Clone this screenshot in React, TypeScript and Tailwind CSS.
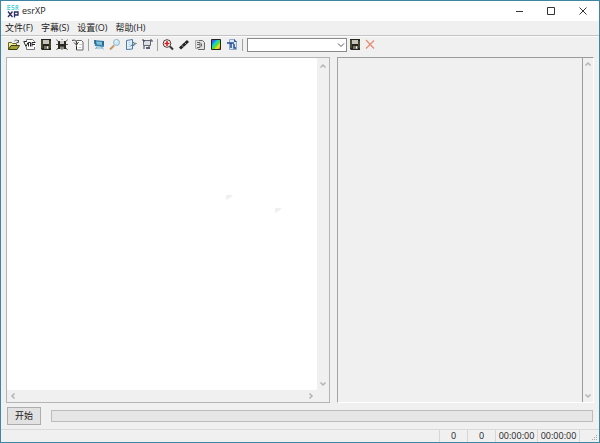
import type { ReactNode } from "react";

const menus = ["文件(F)", "字幕(S)", "设置(O)", "帮助(H)"];

function Glyph({ children }: { children: ReactNode }) {
  return (
    <svg viewBox="0 0 16 16" className="size-4" fill="none" aria-hidden="true">
      {children}
    </svg>
  );
}

function Floppy() {
  return (
    <>
      <path d="M3 2h10v11H4l-1-1z" fill="#25251c" />
      <path d="M5 3h6v4H5z" fill="#c4c4ba" />
      <path d="M4 3v8M12 4v7" stroke="#66663a" />
      <path d="M6 9h5v3H6z" fill="#77776e" />
      <path d="M9 9.500h1v2H9z" fill="#fff" />
    </>
  );
}

type Tool = { name: string; art: ReactNode };

const fileTools: Tool[] = [
  {
    name: "Open video",
    art: (
      <>
        <path d="M2.500 12.500v-7h3l1 1h4v2" fill="#f3ee9a" stroke="#66662c" />
        <path d="M2.500 12.500l2.500-4h8.500l-2.500 4z" fill="#a3a332" stroke="#3c3c12" />
        <path d="M8.500 4c1-1.200 2.500-1.200 3.500 0M12.500 3v2.500h-2" stroke="#555" />
      </>
    ),
  },
  {
    name: "Open AVS",
    art: (
      <>
        <path d="M4.500 2.500h6l2 2v8h-8z" fill="#fff" stroke="#777" />
        <path d="M2 5h12v5H2z" fill="#fff" />
        <path d="M1.500 4.500h3M2 5l2 4.500L6 5.500M6.500 9.500v-4h2v4M10 9.500v-4h3.500M10 7.500h3" stroke="#222" />
      </>
    ),
  },
  { name: "Save", art: <Floppy /> },
  {
    name: "Save as",
    art: (
      <>
        <path d="M4 4h8v8H4z" fill="#292921" />
        <path d="M6 4h4v3H6z" fill="#c9c9c0" />
        <path d="M6 9.500h4V12H6z" fill="#88887e" />
        <path d="M2.500 2.500l1.500 2M13.500 2.500l-1.500 2M2.500 13l1.500-2M13.500 13l-1.500-2M2 7.500h2M12 7.500h2M8 2v1M8 12v1" stroke="#5c5c44" />
      </>
    ),
  },
  {
    name: "Import subtitles",
    art: (
      <>
        <path d="M6.500 3.500h5l1.500 1.500v8H6.500z" fill="#fff" stroke="#666" />
        <path d="M2 3.500c3-1 4.500 0 4.500 3M4 5.500L6.500 8l2-3" stroke="#443b37" />
        <path d="M9 7.500h3M8.500 10.500h3" stroke="#ccc" />
        <path d="M6.500 9.500v3" stroke="#222" />
      </>
    ),
  },
];

const viewTools: Tool[] = [
  {
    name: "Video window",
    art: (
      <>
        <path d="M3 3l10 1v6L4 9z" fill="#3684ae" />
        <path d="M5 4.500l6 .500v3l-5-.500z" fill="#86bfd8" />
        <path d="M3 4h2M3 6h2M11 5h2M11 7h2" stroke="#24516f" />
        <path d="M6 9.500L4.500 12M10.500 10l2 2.500M5 11h7" stroke="#74b0cb" />
      </>
    ),
  },
  {
    name: "Find",
    art: (
      <>
        <path d="M3 12.500l4-4" stroke="#c99663" strokeWidth="2" />
        <circle cx="9.500" cy="5.500" r="3" fill="#cce8f7" stroke="#8fb1c6" />
        <path d="M8 4.500l2-1" stroke="#fff" />
      </>
    ),
  },
  {
    name: "Edit",
    art: (
      <>
        <path d="M3.500 3.500l6-1V12l-6 .500z" fill="#e5f2fb" stroke="#4c7ba4" />
        <path d="M5.500 5.500h2M5.500 7.500h2M5.500 9.500h2" stroke="#b0cadb" />
        <path d="M7.500 9l5-3M10 5l2.500 2L10 9" stroke="#4e7e9d" />
        <path d="M12 6.500h2" stroke="#bc9755" />
      </>
    ),
  },
  {
    name: "Preview",
    art: (
      <>
        <path d="M4.500 3.500h7v5h-7z" fill="#dedee6" stroke="#666676" />
        <path d="M3 3h2v2M11 3h2v2M5 9v3M10 9v3" stroke="#3f3f55" />
        <path d="M7 10h4v2H7z" fill="#5d5d75" />
      </>
    ),
  },
];

const ocrTools: Tool[] = [
  {
    name: "Zoom in",
    art: (
      <>
        <circle cx="7" cy="6.500" r="3.800" fill="#fff" stroke="#55302f" />
        <path d="M4.500 6.500h5M7 4v5" stroke="#d21f24" strokeWidth="1.600" />
        <path d="M10 9.500l3 3" stroke="#333" strokeWidth="2" />
      </>
    ),
  },
  {
    name: "Pick",
    art: (
      <>
        <path d="M4 11.500l8-7.500" stroke="#222" strokeWidth="3" />
        <path d="M5.500 8l2 2M8.500 5.500l1.500 1.500" stroke="#999" />
      </>
    ),
  },
  {
    name: "Copy text",
    art: (
      <>
        <path d="M3.500 3.500h4v8h-4z" fill="#e2e2e2" stroke="#aaa" />
        <path d="M7 3.500h3.500l2 2v7H6" fill="#e2e2df" stroke="#666" />
        <path d="M5 5.500h3v2H5M8 7.500v3H5M9.500 6.500v3" stroke="#666" />
      </>
    ),
  },
  {
    name: "Colors",
    art: (
      <>
        <defs>
          <linearGradient id="spectrum" x1="3" y1="3" x2="13" y2="12" gradientUnits="userSpaceOnUse">
            <stop offset="0" stopColor="#d022cf" />
            <stop offset=".2" stopColor="#2468ec" />
            <stop offset=".4" stopColor="#19d7d0" />
            <stop offset=".55" stopColor="#55db2b" />
            <stop offset=".75" stopColor="#f7e522" />
            <stop offset="1" stopColor="#e52722" />
          </linearGradient>
        </defs>
        <path d="M3.500 2.500h9v10h-9z" fill="url(#spectrum)" stroke="#222" />
      </>
    ),
  },
  {
    name: "Export text",
    art: (
      <>
        <path d="M5.500 2.500h5l2 2v8h-7z" fill="#dceafa" stroke="#93a9c7" />
        <path d="M3 6h7M7 6v5M10 7v4h2" stroke="#234f94" strokeWidth="1.500" />
        <path d="M10.500 2.500v2h2" stroke="#234f94" />
      </>
    ),
  },
];

function ToolGroup({ tools }: { tools: Tool[] }) {
  return (
    <div className="flex">
      {tools.map((tool) => (
        <button key={tool.name} type="button" aria-label={tool.name} className="size-4">
          <Glyph>{tool.art}</Glyph>
        </button>
      ))}
    </div>
  );
}

function Divider() {
  return (
    <div className="flex w-[5px] justify-center">
      <div className="h-3 w-px bg-[#a0a0a0]" />
    </div>
  );
}

const arrows = {
  up: "M1.500 5.500L4 3l2.500 2.500",
  down: "M1.500 2.500L4 5l2.500-2.500",
  left: "M5.500 1.500L3 4l2.500 2.500",
  right: "M2.500 1.500L5 4 2.500 6.500",
};

function Arrow({ to }: { to: keyof typeof arrows }) {
  return (
    <button type="button" aria-label={`Scroll ${to}`} className="flex size-3 items-center justify-center">
      <svg viewBox="0 0 8 8" className="size-2" fill="none" aria-hidden="true">
        <path d={arrows[to]} stroke="#b4b4b4" strokeWidth="1.500" />
      </svg>
    </button>
  );
}

function Smudge() {
  return (
    <svg viewBox="0 0 8 6" className="h-1.5 w-2" aria-hidden="true">
      <path d="M0 0h7L4 3 0 5z" fill="#f0f0f0" />
    </svg>
  );
}

export default function App() {
  return (
    <div className="flex h-screen flex-col border border-[#3f86a3] bg-[#f0f0f0] font-['Open_Sans','Noto_Sans_CJK_SC',sans-serif] text-[9px] leading-3 text-[#1c1c1c]">
      <header className="flex h-5 shrink-0 items-center bg-white pl-1.5">
        <svg viewBox="0 0 12 14" className="h-3.5 w-3" fill="none" aria-hidden="true">
          <path d="M.5 1.500H3.500M.5 3.500h3M.5 5.500h3M1 1v5M7.500 1.500H5v2h2v2H4.500M9 6V1.500h2v2H9M10 4l1.500 2" stroke="#5fd3da" />
          <path d="M1 7.500l4.500 5.500M5.500 7.500L1 13M7.500 13.500V8H11v3H8" stroke="#2c2c66" strokeWidth="1.300" />
        </svg>
        <h1 className="ml-[3px]">esrXP</h1>
        <div className="ml-auto flex h-full">
          <button type="button" aria-label="Minimize" className="flex w-8 items-center justify-center">
            <svg viewBox="0 0 8 8" className="size-2" aria-hidden="true">
              <path d="M1 4.500h7" stroke="#333" />
            </svg>
          </button>
          <button type="button" aria-label="Maximize" className="flex w-8 items-center justify-center">
            <svg viewBox="0 0 8 8" className="size-2" fill="none" aria-hidden="true">
              <path d="M.5 .5h7v7h-7z" stroke="#333" />
            </svg>
          </button>
          <button type="button" aria-label="Close" className="flex w-8 items-center justify-center">
            <svg viewBox="0 0 8 8" className="size-2" aria-hidden="true">
              <path d="M.5 .5l7 7M7.500 .5l-7 7" stroke="#333" />
            </svg>
          </button>
        </div>
      </header>

      <nav className="flex h-[15px] shrink-0 items-center gap-2 border-b border-[#c4c4c4] pl-1">
        {menus.map((menu) => (
          <button key={menu} type="button">
            {menu}
          </button>
        ))}
      </nav>

      <div role="toolbar" className="flex h-[17px] shrink-0 items-center border-t border-[#fafafa] pl-[5px]">
        <ToolGroup tools={fileTools} />
        <Divider />
        <ToolGroup tools={viewTools} />
        <Divider />
        <ToolGroup tools={ocrTools} />
        <Divider />
        <div className="relative ml-0.5 flex">
          <select aria-label="Profile" className="h-3.5 w-[100px] appearance-none border border-[#8a8a8a] bg-white px-1">
            <option></option>
          </select>
          <svg viewBox="0 0 8 8" className="pointer-events-none absolute top-[3px] right-0.5 size-2" fill="none" aria-hidden="true">
            <path d="M1 2.500L4 5.500 7 2.500" stroke="#555" />
          </svg>
        </div>
        <button type="button" aria-label="Save profile" className="size-4">
          <Glyph>
            <Floppy />
          </Glyph>
        </button>
        <button type="button" aria-label="Delete profile" className="size-4">
          <Glyph>
            <path d="M3 3l8 8.500M11 3.500l-8 8" stroke="#e58a72" strokeWidth="1.200" />
          </Glyph>
        </button>
      </div>

      <main className="flex min-h-0 flex-1 gap-[7px] px-[5px] pt-1">
        <section className="flex min-w-0 flex-[325] flex-col border border-[#b4b4b4]">
          <div className="flex min-h-0 flex-1">
            <div className="relative min-w-0 flex-1 bg-white">
              <textarea aria-label="Video canvas" className="block size-full resize-none outline-none" />
              <div className="absolute top-[137px] left-[219px]">
                <Smudge />
              </div>
              <div className="absolute top-[150px] left-[268px]">
                <Smudge />
              </div>
            </div>
            <div className="flex w-3 flex-col justify-between pt-0.5">
              <Arrow to="up" />
              <Arrow to="down" />
            </div>
          </div>
          <div className="flex h-3 justify-between pr-3">
            <Arrow to="left" />
            <Arrow to="right" />
          </div>
        </section>
        <section className="flex min-w-0 flex-[258] justify-end border border-t-[#9c9c9c] border-r-white border-b-white border-l-[#a4a4a4]">
          <div className="flex w-[11px] flex-col items-center justify-between border-l border-[#9c9c9c]">
            <Arrow to="up" />
            <Arrow to="down" />
          </div>
        </section>
      </main>

      <div className="flex h-[26px] shrink-0 items-center gap-2.5 px-1.5">
        <button type="button" className="h-[18px] w-[34px] border border-[#adadad] bg-[#e2e2e2]">
          开始
        </button>
        <div role="progressbar" aria-label="Progress" className="h-3 flex-1 border border-[#bcbcbc] bg-[#e6e6e6]" />
      </div>

      <footer className="flex h-[13px] shrink-0 border-t border-[#dadada] text-center">
        <div className="flex-1" />
        <div className="w-7 border-l border-[#d7d7d7]">0</div>
        <div className="w-7 border-l border-[#d7d7d7]">0</div>
        <div className="w-[42px] border-l border-[#d7d7d7]">00:00:00</div>
        <div className="w-[42px] border-l border-[#d7d7d7]">00:00:00</div>
        <div className="flex w-5 items-end justify-end border-l border-[#d7d7d7]">
          <svg viewBox="0 0 8 8" className="size-2" aria-hidden="true">
            <path d="M5 1h1v1H5zM5 3h1v1H5zM3 3h1v1H3zM5 5h1v1H5zM3 5h1v1H3zM1 5h1v1H1z" fill="#aaa" />
          </svg>
        </div>
      </footer>
    </div>
  );
}
